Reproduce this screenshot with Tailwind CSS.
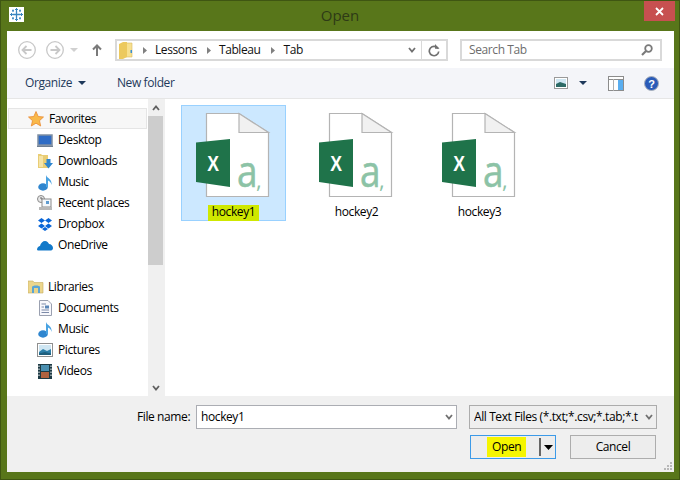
<!DOCTYPE html>
<html lang="en">
<head>
  <meta charset="UTF-8" />
  <title>Open</title>
  <script src="https://cdn.jsdelivr.net/npm/@tailwindcss/browser@4"></script>
</head>
<body class="m-0 overflow-hidden">

  <div class="w-[680px] h-[480px] flex flex-col bg-[#58761a] border border-[#3f5612] font-['Open_Sans',sans-serif] text-[12px] tracking-[-0.4px] text-black">

    <!-- title bar -->
    <div class="h-[30px] shrink-0 grid grid-cols-[1fr_auto_1fr]">
      <div class="pl-[8px] pt-[6px]">
        <div class="w-[15px] h-[15px] bg-white flex items-center justify-center">
          <svg width="13" height="13" viewBox="0 0 13 13" stroke="#3a86c0" fill="none">
            <path d="M6.500 2.500V10.500M2.500 6.500H10.500" stroke-width="1.300"/>
            <path d="M6.500 0V3M5 1.500H8M6.500 10V13M5 11.500H8M0 6.500H3M1.500 5V8M10 6.500H13M11.500 5V8" stroke-width="1"/>
            <path d="M3 1.500V4M2 2.700H4M10 1.500V4M9 2.700H11M3 9V11.500M2 10.300H4M10 9V11.500M9 10.300H11" stroke-width="1"/>
          </svg>
        </div>
      </div>
      <div class="text-[15px] leading-[29px] text-[#2e3a16] tracking-normal">Open</div>
      <div class="flex justify-end pr-[4px]">
        <div class="w-[31px] h-[20px] bg-[#c75050] flex items-center justify-center">
          <svg width="9" height="9" viewBox="0 0 9 9" stroke="#fff" stroke-width="1.800"><path d="M1 1L8 8M8 1L1 8"/></svg>
        </div>
      </div>
    </div>

    <!-- client area -->
    <div class="ml-[6px] w-[667px] h-[441px] shrink-0 bg-white flex flex-col">

      <!-- navigation row -->
      <div class="h-[37px] shrink-0 flex items-center pt-[1px]">
        <div class="w-[108px] pl-[11px] flex items-center shrink-0">
          <svg width="18" height="18" viewBox="0 0 18 18" fill="none" stroke="#c8c8c8" stroke-width="1.300"><circle cx="9" cy="9" r="8.300"/><path d="M13.500 9H5M8.500 5L4.500 9L8.500 13" stroke-width="1.800"/></svg>
          <svg class="ml-[10px]" width="18" height="18" viewBox="0 0 18 18" fill="none" stroke="#c8c8c8" stroke-width="1.300"><circle cx="9" cy="9" r="8.300"/><path d="M4.500 9H13M9.500 5L13.500 9L9.500 13" stroke-width="1.800"/></svg>
          <svg class="ml-[6px]" width="8" height="4" viewBox="0 0 8 4"><path d="M0 0H8L4 4Z" fill="#d0d0d0"/></svg>
          <svg class="ml-[14px]" width="10" height="12" viewBox="0 0 10 12" fill="none" stroke="#7a7a7a" stroke-width="2"><path d="M5 12V2M1 5.500L5 1.500L9 5.500"/></svg>
        </div>
        <div class="w-[333px] h-[22px] shrink-0 flex border-2 border-[#d9d9d9] items-center">
          <div class="flex-1 flex items-center">
            <svg class="ml-[2px] shrink-0" width="14" height="17" viewBox="0 0 14 17"><path d="M5 1H13V15H5Z" fill="#f7e08f" stroke="#d8bb62" stroke-width=".6"/><path d="M0 2L4 0H8V15L4 17H0Z" fill="#ecc95e"/><rect x="11.500" y="8" width="1.500" height="3" fill="#3a8fd0"/></svg>
            <svg class="ml-[10px]" width="4" height="7" viewBox="0 0 4 7"><path d="M0 0L4 3.500L0 7Z" fill="#808080"/></svg>
            <span class="ml-[8px] text-[#111]">Lessons</span>
            <svg class="ml-[10px]" width="4" height="7" viewBox="0 0 4 7"><path d="M0 0L4 3.500L0 7Z" fill="#808080"/></svg>
            <span class="ml-[8px] text-[#111]">Tableau</span>
            <svg class="ml-[10px]" width="4" height="7" viewBox="0 0 4 7"><path d="M0 0L4 3.500L0 7Z" fill="#808080"/></svg>
            <span class="ml-[9px] text-[#111]">Tab</span>
          </div>
          <svg class="mr-[5px]" width="8" height="6" viewBox="0 0 8 6" fill="none" stroke="#707070" stroke-width="1.800"><path d="M1 1L4 4.500L7 1"/></svg>
          <div class="w-[25px] h-full border-l border-[#d9d9d9] flex items-center justify-center">
            <svg width="12" height="13" viewBox="0 0 12 13" fill="none" stroke="#707070" stroke-width="1.700"><path d="M10 4.500A4.700 4.700 0 1 0 10.700 7.500"/><path d="M7 0V4.800H11.500Z" fill="#707070" stroke="none"/></svg>
          </div>
        </div>
        <div class="ml-[12px] w-[202px] h-[22px] shrink-0 border-2 border-[#d9d9d9] flex items-center justify-between px-[7px]">
          <span class="text-[#6d6d6d]">Search Tab</span>
          <svg width="12" height="12" viewBox="0 0 12 12" fill="none" stroke="#7a7a7a" stroke-width="1.800"><circle cx="7.500" cy="4.500" r="3.300"/><path d="M5 7L1 11" stroke-width="2.200"/></svg>
        </div>
      </div>

      <!-- command bar -->
      <div class="h-[31px] shrink-0 bg-[#f4f5f9] border-b border-[#e6e6e6] flex items-center text-[#1e395b]">
        <span class="ml-[18px]">Organize</span>
        <svg class="ml-[6px]" width="8" height="4" viewBox="0 0 8 4"><path d="M0 0H8L4 4Z" fill="#1e395b"/></svg>
        <span class="ml-[31px]">New folder</span>
        <div class="ml-auto flex items-center pr-[15px]">
          <svg width="14" height="12" viewBox="0 0 14 12"><rect x="0.500" y="0.500" width="13" height="11" fill="#fff" stroke="#9a9a9a"/><rect x="2" y="2" width="10" height="8" fill="#cfe6f2"/><path d="M2 7L6 5L12 7V10H2Z" fill="#2c6a66"/></svg>
          <svg class="ml-[11px]" width="8" height="4" viewBox="0 0 8 4"><path d="M0 0H8L4 4Z" fill="#1e395b"/></svg>
          <svg class="ml-[21px]" width="16" height="15" viewBox="0 0 16 15"><rect x="0.500" y="0.500" width="15" height="14" fill="#fff" stroke="#8c8c8c"/><path d="M0 3.500H16" stroke="#8c8c8c"/><path d="M5.500 3V15" stroke="#b0b0b0"/><rect x="10" y="4" width="5" height="10" fill="#5aaef0"/></svg>
          <svg class="ml-[20px]" width="15" height="15" viewBox="0 0 15 15"><circle cx="7.500" cy="7.500" r="7" fill="#2a5bb8" stroke="#aab0bb"/><text x="7.500" y="11.500" text-anchor="middle" font-family="'Liberation Sans',sans-serif" font-size="11" font-weight="700" fill="#fff">?</text></svg>
        </div>
      </div>

      <!-- body -->
      <div class="h-[297px] shrink-0 flex">
        <!-- sidebar -->
        <div class="w-[141px] shrink-0 pt-[9px] pl-[1px]">
          <div class="h-[21px] w-[139px] border border-[#e5e5e5] bg-[#f7f7f7] flex items-center pl-[19px]">
            <svg width="16" height="16" viewBox="0 0 16 16"><path d="M8 .5L10.200 5.500L15.500 6L11.500 9.700L12.700 15L8 12.200L3.300 15L4.500 9.700L.5 6L5.800 5.500Z" fill="#f9b94a" stroke="#ea8a32" stroke-width=".8"/></svg>
            <span class="ml-[5px]">Favorites</span>
          </div>
          <div class="pt-[0.5px]">
            <div class="h-[21px] flex items-center pl-[29px]">
              <svg class="w-[16px] shrink-0" width="16" height="13" viewBox="0 0 16 13"><rect x="1" y="1" width="14" height="10" fill="#2f6cc5" stroke="#7f8ea3" stroke-width="1.500"/><rect x="0" y="11.500" width="16" height="1.500" fill="#6f7f92"/></svg>
              <span class="ml-[5px]">Desktop</span>
            </div>
            <div class="h-[21px] flex items-center pl-[30px]">
              <svg class="w-[15px] shrink-0" width="15" height="16" viewBox="0 0 15 16"><path d="M0 1H3L4 2H10V15H0Z" fill="#e9cd75"/><path d="M1 3H5V14H1Z" fill="#f5e4a8"/><path d="M8.500 6H12.500V10H15L10.500 15.500L6 10H8.500Z" fill="#2f86cf"/></svg>
              <span class="ml-[5px]">Downloads</span>
            </div>
            <div class="h-[21px] flex items-center pl-[30px]">
              <svg class="w-[15px] shrink-0" width="15" height="17" viewBox="0 0 15 17"><ellipse cx="5" cy="13" rx="4.800" ry="3.700" fill="#2f86cf"/><path d="M8 13V1C9 4.500 14.500 5 13.500 11C13 8 11 7 10 6.500V13Z" fill="#4aa3e2"/></svg>
              <span class="ml-[5px]">Music</span>
            </div>
            <div class="h-[21px] flex items-center pl-[29px]">
              <svg class="w-[16px] shrink-0" width="16" height="16" viewBox="0 0 16 16"><circle cx="4" cy="4" r="3.500" fill="#e8e8e8" stroke="#8a8a8a"/><path d="M4 2V4H6" stroke="#666" fill="none"/><rect x="5" y="4" width="9" height="8" fill="#f4f8fc" stroke="#8a8a8a"/><rect x="9" y="6" width="3" height="3" fill="#5d9bd0"/><rect x="2" y="12" width="13" height="3" fill="#b8b8b8"/></svg>
              <span class="ml-[5px]">Recent places</span>
            </div>
            <div class="h-[21px] flex items-center pl-[29px]">
              <svg class="w-[16px] shrink-0" width="16" height="14" viewBox="0 0 16 14"><path d="M4.500 1L8 3.500L4.500 6L1 3.500ZM11.500 1L15 3.500L11.500 6L8 3.500ZM4.500 6.500L8 9L4.500 11.500L1 9ZM11.500 6.500L15 9L11.500 11.500L8 9ZM8 10L11 12L8 14L5 12Z" fill="#0a66d8"/></svg>
              <span class="ml-[5px]">Dropbox</span>
            </div>
            <div class="h-[21px] flex items-center pl-[29px]">
              <svg class="w-[16px] shrink-0" width="16" height="11" viewBox="0 0 16 11"><path d="M0 10C0 7 2 6 3 6C3.500 3 6 1 8 1C10 1 11.500 2.500 12 4C14 4 16 6 16 8C16 9.500 15 10.500 14 10.500H1Z" fill="#1279c9"/></svg>
              <span class="ml-[5px]">OneDrive</span>
            </div>
          </div>
          <div class="mt-[21px] h-[21px] flex items-center pl-[20px]">
            <svg class="w-[16px] shrink-0" width="16" height="14" viewBox="0 0 16 14"><path d="M0 1H5L6 2.500H15V13H0Z" fill="#ecd68c" stroke="#c7ad5e" stroke-width=".6"/><path d="M4 7C4 5 12 5 12 7V13H4Z" fill="#5aa5d6"/><rect x="6" y="8" width="4" height="5" fill="#e9d48a"/></svg>
            <span class="ml-[4px]">Libraries</span>
          </div>
          <div class="h-[21px] flex items-center pl-[31px]">
            <svg class="w-[13px] shrink-0" width="13" height="16" viewBox="0 0 13 16"><path d="M.5 .5H9L12.500 4V15.500H.5Z" fill="#f8f8fc" stroke="#9aa0b0"/><path d="M2.500 4H7M2.500 7H5M2.500 10H10M2.500 12.500H10" stroke="#7c8aa8"/><rect x="6" y="5.500" width="4" height="3" fill="#5a86b8"/></svg>
            <span class="ml-[6px]">Documents</span>
          </div>
          <div class="h-[21px] flex items-center pl-[30px]">
            <svg class="w-[15px] shrink-0" width="15" height="17" viewBox="0 0 15 17"><ellipse cx="5" cy="13" rx="4.800" ry="3.700" fill="#2f86cf"/><path d="M8 13V1C9 4.500 14.500 5 13.500 11C13 8 11 7 10 6.500V13Z" fill="#4aa3e2"/></svg>
            <span class="ml-[5px]">Music</span>
          </div>
          <div class="h-[21px] flex items-center pl-[29px]">
            <svg class="w-[16px] shrink-0" width="16" height="14" viewBox="0 0 16 14"><rect x="0.500" y="0.500" width="15" height="13" fill="#fff" stroke="#8f8f8f"/><rect x="2" y="2" width="12" height="10" fill="#cfe6f2"/><path d="M2 9L6 6L10 8L14 6V12H2Z" fill="#2d7fa8"/><path d="M2 10.500L8 9L14 10.500V12H2Z" fill="#1f5f7d"/></svg>
            <span class="ml-[5px]">Pictures</span>
          </div>
          <div class="h-[21px] flex items-center pl-[30px]">
            <svg class="w-[14px] shrink-0" width="14" height="15" viewBox="0 0 14 15"><rect width="14" height="15" fill="#1d3a44"/><rect x="3" y="1" width="8" height="6" fill="#4a8fb0"/><rect x="3" y="8" width="8" height="6" fill="#b0623f"/><path d="M1 1.500V13.500M13 1.500V13.500" stroke="#fff" stroke-dasharray="1.500 1.500"/></svg>
            <span class="ml-[5px]">Videos</span>
          </div>
        </div>

        <!-- scrollbar -->
        <div class="w-[17px] shrink-0 bg-[#f0f0f0] flex flex-col pr-[2px]">
          <div class="h-[17px] flex items-center justify-center">
            <svg width="8" height="6" viewBox="0 0 8 6" fill="none" stroke="#606060" stroke-width="1.800"><path d="M1 5L4 1.500L7 5"/></svg>
          </div>
          <div class="h-[149px] bg-[#cdcdcd]"></div>
          <div class="mt-auto h-[17px] flex items-center justify-center">
            <svg width="8" height="6" viewBox="0 0 8 6" fill="none" stroke="#606060" stroke-width="1.800"><path d="M1 1L4 4.500L7 1"/></svg>
          </div>
        </div>

        <!-- file tiles -->
        <div class="flex-1 flex gap-[18px] pl-[16px] pt-[6px] items-start">
          <div class="w-[105px] h-[116px] bg-[#cce8ff] border border-[#99d1ff] flex flex-col items-center">
            <svg class="mt-[7px] mr-[1px] overflow-visible" width="74" height="84" viewBox="0 0 74 84">
              <path d="M10.500 .5H43L72.500 19.500V83.500H10.500Z" fill="#fff" stroke="#b4b4b4" stroke-width="1.200"/>
              <path d="M43 .5L72.500 19.500H43Z" fill="#f1f1f1" stroke="#b4b4b4" stroke-width="1.200"/>
              <path d="M0 29.500L34 26V74L0 69Z" fill="#1f734a"/>
              <text transform="translate(17 58) scale(.8 1)" text-anchor="middle" font-family="'Liberation Sans',sans-serif" font-size="22" font-weight="700" fill="#fff">X</text>
              <text transform="translate(41 74) scale(.86 1)" font-family="'Open Sans',sans-serif" font-size="43" letter-spacing="0" fill="#8cc3a6" stroke="#8cc3a6" stroke-width=".6">a</text>
              <text x="60" y="75" font-family="'Open Sans',sans-serif" font-size="22" letter-spacing="0" fill="#8cc3a6">,</text>
            </svg>
            <span class="mt-[8px] leading-[13px] pb-[3px] px-[4px] bg-[#cfe800]">hockey1</span>
          </div>
          <div class="w-[105px] h-[116px] border border-transparent flex flex-col items-center">
            <svg class="mt-[7px] mr-[1px] overflow-visible" width="74" height="84" viewBox="0 0 74 84">
              <path d="M10.500 .5H43L72.500 19.500V83.500H10.500Z" fill="#fff" stroke="#b4b4b4" stroke-width="1.200"/>
              <path d="M43 .5L72.500 19.500H43Z" fill="#f1f1f1" stroke="#b4b4b4" stroke-width="1.200"/>
              <path d="M0 29.500L34 26V74L0 69Z" fill="#1f734a"/>
              <text transform="translate(17 58) scale(.8 1)" text-anchor="middle" font-family="'Liberation Sans',sans-serif" font-size="22" font-weight="700" fill="#fff">X</text>
              <text transform="translate(41 74) scale(.86 1)" font-family="'Open Sans',sans-serif" font-size="43" letter-spacing="0" fill="#8cc3a6" stroke="#8cc3a6" stroke-width=".6">a</text>
              <text x="60" y="75" font-family="'Open Sans',sans-serif" font-size="22" letter-spacing="0" fill="#8cc3a6">,</text>
            </svg>
            <span class="mt-[8px] leading-[13px]">hockey2</span>
          </div>
          <div class="w-[105px] h-[116px] border border-transparent flex flex-col items-center">
            <svg class="mt-[7px] mr-[1px] overflow-visible" width="74" height="84" viewBox="0 0 74 84">
              <path d="M10.500 .5H43L72.500 19.500V83.500H10.500Z" fill="#fff" stroke="#b4b4b4" stroke-width="1.200"/>
              <path d="M43 .5L72.500 19.500H43Z" fill="#f1f1f1" stroke="#b4b4b4" stroke-width="1.200"/>
              <path d="M0 29.500L34 26V74L0 69Z" fill="#1f734a"/>
              <text transform="translate(17 58) scale(.8 1)" text-anchor="middle" font-family="'Liberation Sans',sans-serif" font-size="22" font-weight="700" fill="#fff">X</text>
              <text transform="translate(41 74) scale(.86 1)" font-family="'Open Sans',sans-serif" font-size="43" letter-spacing="0" fill="#8cc3a6" stroke="#8cc3a6" stroke-width=".6">a</text>
              <text x="60" y="75" font-family="'Open Sans',sans-serif" font-size="22" letter-spacing="0" fill="#8cc3a6">,</text>
            </svg>
            <span class="mt-[8px] leading-[13px]">hockey3</span>
          </div>
        </div>
      </div>

      <!-- footer -->
      <div class="flex-1 bg-[#f0f0f0] relative">
        <div class="flex items-center pt-[9px]">
          <span class="ml-[130px] w-[59px] shrink-0">File name:</span>
          <div class="w-[261px] h-[24px] shrink-0 bg-white border border-[#abadb3] flex items-center justify-between pl-[4px] pr-[3px]">
            <span>hockey1</span>
            <svg width="8" height="6" viewBox="0 0 8 6" fill="none" stroke="#707070" stroke-width="1.800"><path d="M1 1L4 4.500L7 1"/></svg>
          </div>
          <div class="ml-[12px] w-[188px] h-[24px] shrink-0 bg-[#efefef] border border-[#acacac] flex items-center justify-between pl-[4px] pr-[3px]">
            <span class="whitespace-nowrap overflow-hidden w-[166px]">All Text Files (*.txt;*.csv;*.tab;*.t</span>
            <svg width="8" height="6" viewBox="0 0 8 6" fill="none" stroke="#707070" stroke-width="1.800"><path d="M1 1L4 4.500L7 1"/></svg>
          </div>
        </div>
        <div class="flex pl-[463px] pt-[6px] gap-[14px]">
          <div class="w-[86px] h-[24px] bg-[#ededed] border border-[#3c9ae8] flex items-center">
            <span class="ml-[16px] px-[5px] leading-[20px] bg-[#f5f500]">Open</span>
            <div class="ml-auto mr-[2px] flex items-center">
              <div class="w-[2px] h-[18px] bg-[#666]"></div>
              <svg class="ml-[3px]" width="9" height="5" viewBox="0 0 9 5"><path d="M0 0H9L4.500 5Z" fill="#000"/></svg>
            </div>
          </div>
          <div class="w-[86px] h-[24px] bg-[#ededed] border border-[#adadad] flex items-center justify-center">Cancel</div>
        </div>
        <!-- resize grip -->
        <svg class="absolute right-[1px] bottom-[1px]" width="9" height="9" viewBox="0 0 9 9" fill="#b8b8b8"><path d="M6 0H8V2H6ZM3 3H5V5H3ZM6 3H8V5H6ZM0 6H2V8H0ZM3 6H5V8H3ZM6 6H8V8H6Z"/></svg>
      </div>
    </div>
  </div>
</body>
</html>
